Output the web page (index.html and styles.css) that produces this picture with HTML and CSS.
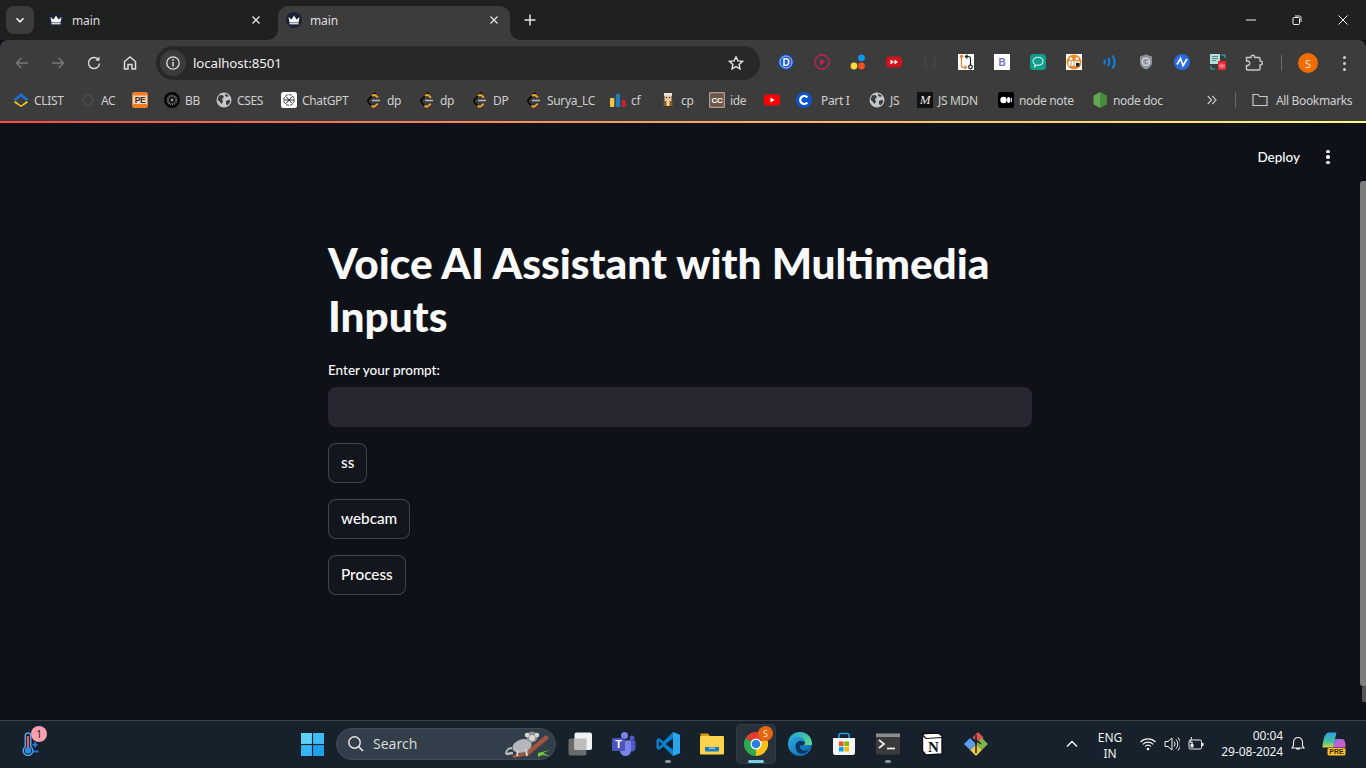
FILE: index.html
```html
<!DOCTYPE html>
<html lang="en">
<head>
<meta charset="utf-8">
<title>main</title>
<link rel="stylesheet" href="styles.css">
</head>
<body>
<svg class="defs" width="0" height="0" aria-hidden="true">
  <symbol id="crown" viewBox="0 0 16 16"><circle cx="8" cy="8" r="8" fill="#1c2233"/><path d="M2.500 5 5.500 7.500 8 3.500l2.500 4 3-2.500-1 5.500h-9z" fill="#f8f8f8"/><rect x="3.500" y="11" width="9" height="1.400" fill="#d8d8d8"/></symbol>
  <symbol id="globe" viewBox="0 0 16 16"><circle cx="8" cy="8" r="7.500" fill="#c4c7c9"/><path d="M3 3.500 6.500 3 8 5 6 7 7 9.500 5.500 12 3.500 9.500 1.500 7.500zM10 9l3.500-1.500.7 2.500-2.700 3.500-1.500-1.500zM9.500 1.500 13 4l-2 1-2-1.500z" fill="#3c3c3c"/></symbol>
  <symbol id="leet" viewBox="0 0 16 16"><path d="M9.500 .5 3 7a3 3 0 0 0 0 4.200L5.500 13.700" fill="none" stroke="#0c0c0c" stroke-width="1.800"/><path d="M5.500 13.700a3 3 0 0 0 4.200 0l2-2M6 4.200a3 3 0 0 1 4.200-.2l1.800 1.700" fill="none" stroke="#f5a524" stroke-width="1.800"/><path d="M6 8.500h8" stroke="#b8b8b8" stroke-width="1.500"/></symbol>
</svg>

<div class="screen">
  <header class="tabstrip">
    <div class="tabsearch"><svg class="ic10" viewBox="0 0 10 10"><path d="M1.500 3.300 5 6.800l3.500-3.500" fill="none" stroke="#f1f1f1" stroke-width="1.600"/></svg></div>
    <div class="tab">
      <svg class="ic"><use href="#crown"/></svg><span class="tab-title">main</span>
      <svg class="ic10" viewBox="0 0 10 10"><path d="M1.500 1.500l7 7m0-7-7 7" stroke="#e3e3e3" stroke-width="1.300"/></svg>
    </div>
    <div class="tab tab-active">
      <svg class="ic"><use href="#crown"/></svg><span class="tab-title">main</span>
      <svg class="ic10" viewBox="0 0 10 10"><path d="M1.500 1.500l7 7m0-7-7 7" stroke="#e3e3e3" stroke-width="1.300"/></svg>
    </div>
    <div class="newtab"><svg class="ic12" viewBox="0 0 12 12"><path d="M6 .5v11M.5 6h11" stroke="#e3e3e3" stroke-width="1.500"/></svg></div>
    <div class="winctl">
      <span class="winbtn"><svg class="ic10" viewBox="0 0 10 10"><path d="M0 5h10" stroke="#f0f0f0"/></svg></span>
      <span class="winbtn"><svg class="ic10" viewBox="0 0 10 10"><rect x="1" y="2.500" width="6.500" height="7" rx="1" fill="none" stroke="#f0f0f0"/><path d="M3 1h4.500a1.500 1.500 0 0 1 1.500 1.500V7" fill="none" stroke="#f0f0f0"/></svg></span>
      <span class="winbtn"><svg class="ic10" viewBox="0 0 10 10"><path d="M.5.500l9 9m0-9-9 9" stroke="#f0f0f0"/></svg></span>
    </div>
  </header>

  <div class="toolbar">
    <span class="navbtn"><svg class="ic" viewBox="0 0 16 16"><path d="M14 8H2.500M7.500 3l-5 5 5 5" fill="none" stroke="#777" stroke-width="1.500"/></svg></span>
    <span class="navbtn"><svg class="ic" viewBox="0 0 16 16"><path d="M2 8h11.500M8.500 3l5 5-5 5" fill="none" stroke="#777" stroke-width="1.500"/></svg></span>
    <span class="navbtn"><svg class="ic" viewBox="0 0 16 16"><path d="M13.500 8.500A5.500 5.500 0 1 1 12 4.300" fill="none" stroke="#dcdcdc" stroke-width="1.500"/><path d="M13.500 1.500v4.200H9.300z" fill="#dcdcdc"/></svg></span>
    <span class="navbtn"><svg class="ic" viewBox="0 0 16 16"><path d="M2.500 14V6.500L8 2l5.500 4.500V14H10V9.500H6V14z" fill="none" stroke="#dcdcdc" stroke-width="1.500"/></svg></span>
    <div class="omnibox">
      <span class="siteinfo"><svg class="ic" viewBox="0 0 16 16"><circle cx="8" cy="8" r="6.200" fill="none" stroke="#e3e3e3" stroke-width="1.300"/><path d="M8 7v4.500" stroke="#e3e3e3" stroke-width="1.400"/><circle cx="8" cy="5" r=".9" fill="#e3e3e3"/></svg></span>
      <span class="url">localhost:8501</span>
      <svg class="ic star" viewBox="0 0 16 16"><path d="M8 1.800l1.900 4.100 4.500.5-3.300 3 .9 4.400L8 11.600l-4 2.200.9-4.400-3.300-3 4.500-.5z" fill="none" stroke="#e3e3e3" stroke-width="1.400"/></svg>
    </div>
    <div class="exts">
      <span class="ext"><svg class="ic" viewBox="0 0 16 16"><circle cx="8" cy="8" r="7.500" fill="#1a56d6"/><circle cx="8" cy="8" r="6" fill="none" stroke="#bcd0f7" stroke-width=".9"/><text x="8" y="11.500" class="t-d">D</text></svg></span>
      <span class="ext"><svg class="ic" viewBox="0 0 16 16"><circle cx="8" cy="8" r="7" fill="none" stroke="#c2224f" stroke-width="1.400"/><path d="M6 4.500 11 8l-5 3.500z" fill="#c2224f"/></svg></span>
      <span class="ext"><svg class="ic" viewBox="0 0 16 16"><circle cx="11.500" cy="3.800" r="3.400" fill="#0a97f5"/><circle cx="4" cy="12" r="3.400" fill="#fdd835"/><circle cx="11.500" cy="12" r="3.400" fill="#f4511e"/></svg></span>
      <span class="ext"><svg class="ic" viewBox="0 0 16 16"><rect y="2.500" width="16" height="11" rx="3.500" fill="#d0121b"/><path d="M4.500 5.500 8 8l-3.500 2.500zM8.500 5.500 12 8l-3.500 2.500z" fill="#fff"/></svg></span>
      <span class="ext"><svg class="ic" viewBox="0 0 16 16"><path d="M3 2.500h3M3 2.500v11M3 13.500h3M13 2.500h-3M13 2.500v11M13 13.500h-3" fill="none" stroke="#4a4a4a" stroke-width="1.200"/></svg></span>
      <span class="ext"><svg class="ic" viewBox="0 0 16 16"><rect width="16" height="16" fill="#fff"/><circle cx="3.500" cy="2.500" r="1.800" fill="#ef7d2a"/><path d="M3.500 4v7.500a2 2 0 0 0 2 2H8M6.500 11.500 8.500 13.500 6.500 15" fill="none" stroke="#ef7d2a" stroke-width="1.200"/><circle cx="12.500" cy="13" r="1.800" fill="none" stroke="#222" stroke-width="1.200"/><path d="M12.500 11V4.500a2 2 0 0 0-2-2H8M9.500 .8 7.500 2.500 9.500 4.500" fill="none" stroke="#222" stroke-width="1.200"/></svg></span>
      <span class="ext"><svg class="ic" viewBox="0 0 16 16"><rect width="16" height="16" fill="#fff"/><text x="8" y="11.800" class="t-b">B</text></svg></span>
      <span class="ext"><svg class="ic" viewBox="0 0 16 16"><rect width="16" height="16" rx="3.500" fill="#109c8b"/><path d="M8 3.300c3 0 5 1.600 5 3.900s-2 3.900-5 3.900l-1 0-2.500 1.600.6-2.300C3.700 9.700 3 8.600 3 7.200 3 4.900 5 3.300 8 3.300z" fill="none" stroke="#d8f3ee" stroke-width="1.100"/></svg></span>
      <span class="ext"><svg class="ic" viewBox="0 0 16 16"><rect width="16" height="16" fill="#fff"/><circle cx="8" cy="8" r="7.500" fill="#f08a24"/><rect x="2.500" y="7" width="11" height="5" rx="1" fill="#fff"/><path d="M5 7v5M8 7v5M11 7v5" stroke="#555" stroke-width=".6"/><circle cx="5" cy="4.800" r="1.500" fill="#fff"/><circle cx="11" cy="4.800" r="1.500" fill="#fff"/><rect x="10" y="9" width="3.500" height="3.500" fill="#222"/></svg></span>
      <span class="ext"><svg class="ic" viewBox="0 0 16 16"><g fill="none" stroke="#0a84e8" stroke-width="2"><path d="M2 6a3 3 0 0 1 0 4"/><path d="M6 4a7 7 0 0 1 0 8"/><path d="M10.500 1.500a12 12 0 0 1 0 13"/></g></svg></span>
      <span class="ext"><svg class="ic" viewBox="0 0 16 16"><path d="M8 .5l6 2v6c0 3.500-3 6-6 7-3-1-6-3.500-6-7v-6z" fill="#8d949b"/><circle cx="8" cy="7.800" r="3.600" fill="none" stroke="#d7dadd" stroke-width="1.300"/><path d="M8 7.800h3.400" stroke="#d7dadd" stroke-width="1.300"/></svg></span>
      <span class="ext"><svg class="ic" viewBox="0 0 16 16"><circle cx="8" cy="8" r="8" fill="#2a6be0"/><path d="M3 10.500 6.500 4.500l2.500 7L13 5" fill="none" stroke="#fff" stroke-width="1.700"/></svg></span>
      <span class="ext"><svg class="ic" viewBox="0 0 16 16"><rect x="0" y="0" width="10" height="10" fill="#b4dcd8"/><path d="M2 2.500h6M2 4.500h6M2 6.500h4" stroke="#56807c" stroke-width=".9"/><rect x="8" y="7" width="8" height="9" fill="#e4292f"/><path d="M10 10.500v3M12 9.500v5M14 10.500v3" stroke="#ffd1d1" stroke-width=".9"/><path d="M11 1h4v3M1 12v3h4" fill="none" stroke="#25b7d3" stroke-width="1"/></svg></span>
      <span class="ext"><svg class="ic-18" viewBox="0 0 18 18"><path d="M1.500 3.500h4.500V3a1.800 1.800 0 0 1 3.600 0v.5H14a1 1 0 0 1 1 1V7h.3a2 2 0 0 1 0 4H15v4a1 1 0 0 1-1 1H2.500a1 1 0 0 1-1-1v-3.500H3a2.300 2.300 0 0 0 0-4.500H1.500z" fill="none" stroke="#c8c8c8" stroke-width="1.400"/></svg></span>
    </div>
    <span class="tool-sep"></span>
    <span class="avatar">S</span>
    <span class="kebab"><i></i><i></i><i></i></span>
  </div>

  <nav class="bookmarks">
    <div class="bm-grid">
      <a class="bm"><svg class="ic" viewBox="0 0 16 16"><path d="M.500 7.500 8 1l7.500 6.500-2 1.800L8 4.500 2.500 9.300z" fill="#1d6fd8"/><path d="M2.500 10 8 14.500 13.500 10l1.500 1.500L8 16 1 11.500z" fill="#fbc911" transform="translate(0 -1)"/></svg>CLIST</a>
      <a class="bm"><svg class="ic" viewBox="0 0 16 16"><circle cx="8" cy="8" r="5" fill="none" stroke="#4c4c4c" stroke-width="2.500" stroke-dasharray="2 1.200"/></svg>AC</a>
      <a class="bm"><svg class="ic" viewBox="0 0 16 16"><rect width="16" height="16" rx="2.500" fill="#ef7c26"/><rect x="1" y="3.500" width="14" height="8.500" fill="#e9d6c4"/><text x="8" y="11" class="t-pe">PE</text></svg></a>
      <a class="bm"><svg class="ic" viewBox="0 0 16 16"><circle cx="8" cy="8" r="8" fill="#060606"/><circle cx="8" cy="8" r="4.200" fill="none" stroke="#8a8a8a" stroke-width="2.400" stroke-dasharray=".9 .9"/><circle cx="8" cy="8" r="1.500" fill="#999"/></svg>BB</a>
      <a class="bm"><svg class="ic"><use href="#globe"/></svg>CSES</a>
      <a class="bm"><svg class="ic" viewBox="0 0 16 16"><rect width="16" height="16" rx="2.500" fill="#fff"/><g fill="none" stroke="#333" stroke-width="1"><circle cx="8" cy="8" r="5.300" stroke-dasharray="3 1"/><path d="M5 4.500 11 11.500M11 4.500 5 11.500M3 8h10"/></g></svg>ChatGPT</a>
      <a class="bm"><svg class="ic"><use href="#leet"/></svg>dp</a>
      <a class="bm"><svg class="ic"><use href="#leet"/></svg>dp</a>
      <a class="bm"><svg class="ic"><use href="#leet"/></svg>DP</a>
      <a class="bm"><svg class="ic"><use href="#leet"/></svg>Surya_LC</a>
      <a class="bm"><svg class="ic" viewBox="0 0 16 16"><rect y="6" width="4.300" height="9" rx=".7" fill="#f6c443"/><rect x="5.800" y="2" width="4.300" height="13" rx=".7" fill="#1a7fc1"/><rect x="11.600" y="8" width="4.300" height="7" rx=".7" fill="#c0242c"/></svg>cf</a>
      <a class="bm"><svg class="ic" viewBox="0 0 16 16"><rect x="4" y="1" width="8" height="3" fill="#e6e6e6"/><rect x="4.500" y="3.500" width="7" height="5.500" fill="#f0c8a0"/><rect x="6" y="5" width="1.200" height="1.200" fill="#222"/><rect x="9" y="5" width="1.200" height="1.200" fill="#222"/><rect x="3.500" y="9" width="9" height="5" fill="#8a5a26"/><rect x="6.500" y="9" width="3" height="5" fill="#e8d8a8"/><rect x="4.500" y="14" width="7" height="1.500" fill="#4a3413"/></svg>cp</a>
      <a class="bm"><svg class="ic" viewBox="0 0 16 16"><rect width="16" height="16" fill="#6b5443" rx="1"/><rect x=".8" y=".8" width="14.400" height="14.400" fill="none" stroke="#ddd5cc" stroke-width=".7"/><text x="8" y="11.300" class="t-cc">CC</text></svg>ide</a>
      <a class="bm"><svg class="ic" viewBox="0 0 16 16"><rect y="2.500" width="16" height="11" rx="3" fill="#f00"/><path d="M6.500 5.500 10.500 8l-4 2.500z" fill="#fff"/></svg></a>
      <a class="bm bm-wide"><svg class="ic" viewBox="0 0 16 16"><circle cx="8" cy="8" r="8" fill="#0b54d0"/><path d="M11.300 5.500A4 4 0 1 0 11.300 10.500" fill="none" stroke="#fff" stroke-width="2.200"/></svg>Part I</a>
      <a class="bm"><svg class="ic"><use href="#globe"/></svg>JS</a>
      <a class="bm"><svg class="ic" viewBox="0 0 16 16"><rect width="16" height="16" fill="#101010"/><text x="8" y="12.300" class="t-m">M</text></svg>JS MDN</a>
      <a class="bm"><svg class="ic" viewBox="0 0 16 16"><rect width="16" height="16" rx="2" fill="#000"/><ellipse cx="5.500" cy="8" rx="3.200" ry="3.300" fill="#fff"/><ellipse cx="10.600" cy="8" rx="1.600" ry="3" fill="#fff"/><ellipse cx="13.300" cy="8" rx=".6" ry="2.600" fill="#fff"/></svg>node note</a>
      <a class="bm"><svg class="ic" viewBox="0 0 16 16"><path d="M8 0l6.500 3.800v8.400L8 16l-6.500-3.800V3.800z" fill="#62a84f"/><path d="M8 0l6.500 3.800v8.400L8 16z" fill="#4b8a3d"/></svg>node doc</a>
    </div>
    <span class="bm-more"><svg class="ic10" viewBox="0 0 10 10"><path d="M.8 1 4.500 5 .8 9M5.300 1 9 5 5.300 9" fill="none" stroke="#c4c4c4" stroke-width="1.200"/></svg></span>
    <span class="bm-sep"></span>
    <a class="bm bm-all"><svg class="ic" viewBox="0 0 16 16"><path d="M1 13.500v-11h5l1.500 2h7.500v9z" fill="none" stroke="#c8c8c8" stroke-width="1.200"/></svg>All Bookmarks</a>
  </nav>

  <main class="app">
    <div class="decoration"></div>
    <div class="app-head">
      <span class="deploy">Deploy</span>
      <span class="st-menu"><i></i><i></i><i></i></span>
    </div>
    <section class="block">
      <h1 class="title">Voice AI Assistant with Multimedia Inputs</h1>
      <label class="field-label" for="prompt">Enter your prompt:</label>
      <input class="field" id="prompt" type="text">
      <button class="btn" type="button">ss</button>
      <button class="btn" type="button">webcam</button>
      <button class="btn" type="button">Process</button>
    </section>
    <div class="scroll-track"></div>
    <div class="scroll-thumb"></div>
  </main>

  <footer class="taskbar">
    <div class="tb-left">
      <span class="temp">
        <svg class="ic24" viewBox="0 0 24 24"><path d="M8 1a2.800 2.800 0 0 1 2.800 2.800v11a4.800 4.800 0 1 1-5.600 0v-11A2.800 2.800 0 0 1 8 1z" fill="#16202a" stroke="#5aa8ee" stroke-width="1.400"/><rect x="6.800" y="4" width="2.400" height="12" fill="#d65a7a"/><circle cx="8" cy="18.500" r="3.200" fill="#2f8ae6"/><path d="M15 10v4M12.800 12 15 14.500 17.200 12M12.500 19.500h6" stroke="#1c78e0" stroke-width="1.800" fill="none"/></svg>
        <span class="temp-badge">1</span>
      </span>
    </div>
    <span class="tb-start"><svg class="ic-win" viewBox="0 0 24 24"><rect width="11.400" height="11.400" fill="#5fd0f8"/><rect x="12.600" width="11.400" height="11.400" fill="#3dbcf6"/><rect y="12.600" width="11.400" height="11.400" fill="#36b4f5"/><rect x="12.600" y="12.600" width="11.400" height="11.400" fill="#1ea2f0"/></svg></span>
    <div class="tb-search">
      <svg class="ic18" viewBox="0 0 18 18"><circle cx="7.500" cy="7.500" r="5.700" fill="none" stroke="#e6e6e6" stroke-width="1.500"/><path d="M11.700 11.700 16 16" stroke="#e6e6e6" stroke-width="1.700"/></svg>
      <span class="tb-search-text">Search</span>
      <svg class="monkey" viewBox="0 0 46 30"><path d="M1 25 L8 24" stroke="#b9bdbf" stroke-width="2.500" fill="none"/><path d="M1 25c0-4 3-6 6-6" stroke="#b9bdbf" stroke-width="2" fill="none"/><path d="M7 27 20 23 41 6l3 3-20 17-15 3z" fill="#a0563f"/><ellipse cx="17" cy="17" rx="10" ry="6.500" fill="#b5b8ba" transform="rotate(-18 17 17)"/><circle cx="27" cy="8" r="5.600" fill="#8d9194"/><circle cx="27" cy="9" r="3" fill="#e0d9d3"/><circle cx="22" cy="6" r="2.300" fill="#d6d6d6"/><circle cx="32" cy="6" r="2.300" fill="#d6d6d6"/><path d="M21 20l1 7M13 21l-1 6" stroke="#d0d0d0" stroke-width="2"/><path d="M33 24l12-3-7 3 7 3-8-1-4 2z" fill="#74c83a"/></svg>
    </div>
    <span class="tb-app"><svg class="ic24" viewBox="0 0 24 24"><rect x=".5" y="6.500" width="18" height="17" rx="2" fill="#6b6b6b"/><rect x="6.500" y=".5" width="17.500" height="17.500" rx="2" fill="#f2f2f2"/><rect x="6.500" y="6.500" width="12" height="11.500" fill="#bdbdbd"/></svg></span>
    <span class="tb-app"><svg class="ic24" viewBox="0 0 24 24"><circle cx="12.500" cy="3.500" r="3.500" fill="#7b83eb"/><circle cx="20" cy="6" r="2.500" fill="#5059c9"/><path d="M15 8.500h8.500v7a4 4 0 0 1-4 4H17z" fill="#5059c9"/><path d="M6 8.500h13v10a5.500 5.500 0 0 1-11 0z" fill="#7b83eb"/><rect x="0" y="6" width="13" height="13" rx="1.300" fill="#4b53bc"/><text x="6.500" y="16.300" class="t-t">T</text></svg></span>
    <span class="tb-app tb-run"><svg class="ic24" viewBox="0 0 24 24"><path d="M17 0 7.500 9.500 3 6 .5 7.500v9L3 18l4.500-3.500L17 24l7-3V3z" fill="#0a7fd0"/><path d="M17 0 24 3v18l-7 3z" fill="#2aa5ee"/><path d="M17 6.500v11L9.500 12zM3 8.800 6 12 3 15.200z" fill="#16202a"/></svg></span>
    <span class="tb-app"><svg class="ic24" viewBox="0 0 24 24"><path d="M0 2.500a1 1 0 0 1 1-1h7l2 2.500H1z" fill="#d49a14"/><rect y="4" width="24" height="18.500" rx="1" fill="#fcd34a"/><path d="M5 15h14v3.500a1 1 0 0 1-1 1H6a1 1 0 0 1-1-1z" fill="#1f7cc2"/><rect x="9" y="15.500" width="6" height="1.300" fill="#8fd0f2"/></svg></span>
    <span class="tb-app tb-chrome">
      <svg class="ic24" viewBox="0 0 24 24"><path d="M12 12 1.600 6A12 12 0 0 1 22.400 6z" fill="#e33b2e"/><path d="M12 12 22.400 6A12 12 0 0 1 12 24z" fill="#fbc116"/><path d="M12 12 12 24A12 12 0 0 1 1.600 6z" fill="#2da94f"/><circle cx="12" cy="12" r="5.500" fill="#fff"/><circle cx="12" cy="12" r="4.300" fill="#2a7de1"/></svg>
      <span class="chrome-badge">S</span>
    </span>
    <span class="tb-app"><svg class="ic24" viewBox="0 0 24 24"><defs><linearGradient id="edg" x1="0" y1="0" x2="1" y2="1"><stop offset="0" stop-color="#2fb5e8"/><stop offset="1" stop-color="#0a5aa8"/></linearGradient><linearGradient id="edg2" x1="0" y1="0" x2="1" y2="1"><stop offset="0" stop-color="#1ea2d8"/><stop offset="1" stop-color="#5fe07a"/></linearGradient></defs><circle cx="12" cy="12" r="12" fill="url(#edg)"/><path d="M24 12.500C24 5 18.500 0 12 0 6 0 1.500 4 .5 9c2-3.500 6-5 9.500-4.500 5 .8 7 3.500 7 6 0 1.500-1 2.500-3 2.500h9z" fill="url(#edg2)"/><path d="M7.500 14c0-3 2.500-5 5.500-5 1.500 0 3 .6 4 1.500 0 2-1.300 3-3.500 3-1 0-1.500.5-1.500 1.500 0 3 4 5 8.500 3C18.500 21 15 22 12.500 21.500 9.500 21 7.500 17.500 7.500 14z" fill="#08345e"/></svg></span>
    <span class="tb-app"><svg class="ic24" viewBox="0 0 24 24"><path d="M7 6V3.500A2 2 0 0 1 9 1.500h6a2 2 0 0 1 2 2V6" fill="none" stroke="#1aa3e8" stroke-width="1.600"/><path d="M1 6h22v14.500A2.500 2.500 0 0 1 20.500 23h-17A2.500 2.500 0 0 1 1 20.500z" fill="#f5f5f5"/><rect x="7" y="9.500" width="4.600" height="4.600" fill="#f25022"/><rect x="12.400" y="9.500" width="4.600" height="4.600" fill="#7fba00"/><rect x="7" y="14.900" width="4.600" height="4.600" fill="#00a4ef"/><rect x="12.400" y="14.900" width="4.600" height="4.600" fill="#ffb900"/></svg></span>
    <span class="tb-app tb-run"><svg class="ic24" viewBox="0 0 24 24"><rect y="1.500" width="24" height="21" rx="1.500" fill="#3b3b3b"/><rect y="1.500" width="24" height="3.500" fill="#8c8c8c"/><path d="M3 8l5 4-5 4" fill="none" stroke="#f2f2f2" stroke-width="1.700"/><path d="M11 16.500h8" stroke="#f2f2f2" stroke-width="1.700"/></svg></span>
    <span class="tb-app"><svg class="ic24" viewBox="0 0 24 24"><path d="M5 1.500 18.500 1 22 4v18l-16 1-3.500-4V3z" fill="#fff" stroke="#111" stroke-width="1.400"/><path d="M3 3.500 6 6.500l16-1" fill="none" stroke="#111" stroke-width="1.200"/><text x="13.500" y="19.500" class="t-n">N</text></svg></span>
    <span class="tb-app"><svg class="ic24" viewBox="0 0 24 24"><path d="M14 0l5.500 5.500-5.500 5.500-5.500-5.500z" fill="#d9534f"/><path d="M18 6l6 6-6 6-6-6z" fill="#7ab648"/><path d="M12 12l6 6-6 6-6-6z" fill="#ecc94b"/><path d="M6 6l6 6-6 6-6-6z" fill="#5b9bf3"/><path d="M12 3v18M12 8l5 4" stroke="#222" stroke-width="1.500" fill="none"/></svg></span>
    <div class="tray">
      <span class="tray-chev"><svg class="ic12" viewBox="0 0 12 12"><path d="M1 8.500 6 3.500l5 5" fill="none" stroke="#f0f0f0" stroke-width="1.500"/></svg></span>
      <span class="tray-lang"><span>ENG</span><span>IN</span></span>
      <span class="tray-ic"><svg class="ic16" viewBox="0 0 16 16"><g fill="none" stroke="#f0f0f0" stroke-width="1.100"><path d="M.5 6a10.500 10.500 0 0 1 15 0"/><path d="M2.800 8.300a7.200 7.200 0 0 1 10.400 0"/><path d="M5 10.500a4 4 0 0 1 6 0"/></g><circle cx="8" cy="13" r="1.300" fill="#f0f0f0"/></svg></span>
      <span class="tray-ic"><svg class="ic16" viewBox="0 0 16 16"><path d="M1 5.500h3L8 2v12L4 10.500H1z" fill="none" stroke="#f0f0f0" stroke-width="1"/><path d="M10 5.500a3.500 3.500 0 0 1 0 5M12 3.500a6.500 6.500 0 0 1 0 9M14 1.500a9.500 9.500 0 0 1 0 13" fill="none" stroke="#f0f0f0" stroke-width="1"/></svg></span>
      <span class="tray-ic"><svg class="ic16" viewBox="0 0 16 16"><rect x="1" y="4" width="12.500" height="9" rx="1.500" fill="none" stroke="#f0f0f0"/><rect x="14" y="7" width="1.500" height="3" fill="#f0f0f0"/><rect x="2.500" y="8" width="3" height="3.500" fill="#f0f0f0"/><path d="M3.500 1 2.500 6.500h2L3.500 9" fill="none" stroke="#f0f0f0"/></svg></span>
      <span class="clock"><span>00:04</span><span>29-08-2024</span></span>
      <span class="tray-bell"><svg class="ic16" viewBox="0 0 16 16"><path d="M8 1.500a4.500 4.500 0 0 1 4.500 4.500v3.500l1.500 2.500H2l1.500-2.500V6A4.500 4.500 0 0 1 8 1.500zM6.200 12a1.900 1.900 0 0 0 3.600 0" fill="none" stroke="#f0f0f0" stroke-width="1.100"/></svg></span>
      <span class="tray-copilot"><svg class="ic24" viewBox="0 0 24 24"><defs><linearGradient id="cop" x1="0" y1="0" x2="0" y2="1"><stop offset="0" stop-color="#2f9fe8"/><stop offset=".6" stop-color="#3fc39a"/><stop offset="1" stop-color="#d8cf3c"/></linearGradient><linearGradient id="cop2" x1="0" y1="0" x2="1" y2="1"><stop offset="0" stop-color="#8d6cf0"/><stop offset="1" stop-color="#e85ac0"/></linearGradient></defs><path d="M13 7h7c3 0 3.500 4 3.500 8.500H10z" fill="url(#cop2)"/><path d="M6.500 .5h8l-3.500 15H.5C.5 9 3 .5 6.500 .5z" fill="url(#cop)"/><rect x="5.500" y="16" width="18" height="7.500" rx="1.500" fill="#fbc02d"/><text x="14.500" y="22.200" class="t-pre">PRE</text></svg></span>
    </div>
  </footer>
</div>
</body>
</html>
```
FILE: styles.css
```css
* { box-sizing: border-box; }
html, body { margin: 0; height: 100%; overflow: hidden; background: #0e1117; }
svg { display: block; flex: none; }
.defs { position: absolute; }
.ic { width: 16px; height: 16px; }
.ic-18 { width: 18px; height: 18px; }
.ic10 { width: 10px; height: 10px; }
.ic12 { width: 12px; height: 12px; }
.ic16 { width: 16px; height: 16px; }
.ic18 { width: 18px; height: 18px; }
.ic24 { width: 24px; height: 24px; }
.ic-win { width: 23px; height: 23px; }

.screen {
  display: flex; flex-direction: column; height: 768px; width: 1366px;
  font-family: "Noto Sans", "Open Sans", sans-serif; color: #e3e3e3;
}

/* tab strip */
.tabstrip { display: flex; height: 40px; flex: none; background: #1f2121; padding-top: 6px; }
.tabsearch {
  width: 28px; height: 28px; margin-left: 6px; margin-right: 4px; border-radius: 8px;
  background: #3c3c3c; display: flex; align-items: center; justify-content: center;
}
.tab {
  width: 232px; height: 34px; padding: 0 9px 6px 10px;
  display: flex; align-items: center; font-size: 12px; letter-spacing: -.1px; color: #dedede;
}
.tab-active {
  background: #3c3c3c; border-radius: 10px 10px 0 0; position: relative;
  margin-left: 8px; padding: 0 11px 6px 8px;
}
.tab-active::before, .tab-active::after {
  content: ""; position: absolute; bottom: 0; width: 10px; height: 10px;
}
.tab-active::before { left: -10px; background: radial-gradient(circle at 0 0, transparent 9.500px, #3c3c3c 10px); }
.tab-active::after { right: -10px; background: radial-gradient(circle at 100% 0, transparent 9.500px, #3c3c3c 10px); }
.tab-title { margin-left: 8px; flex: 1; }
.newtab { width: 40px; display: flex; align-items: center; justify-content: center; height: 28px; }
.winctl { margin-left: auto; display: flex; height: 28px; align-items: center; }
.winbtn { width: 46px; display: flex; justify-content: center; }

/* toolbar */
.toolbar {
  height: 45px; flex: none; display: flex; align-items: center; padding: 1px 0 0 4px;
  background: #3c3c3c; border-radius: 8px 8px 0 0;
}
.navbtn { width: 36px; display: flex; justify-content: center; }
.omnibox {
  width: 604px; height: 34px; margin-left: 8px; border-radius: 17px; background: #282828;
  display: flex; align-items: center; padding-left: 4px;
}
.siteinfo {
  width: 26px; height: 26px; border-radius: 50%; background: #3c3c3c;
  display: flex; align-items: center; justify-content: center;
}
.url { margin-left: 7px; font-size: 13.300px; color: #f0f0f0; letter-spacing: -.1px; flex: 1; }
.star { margin-right: 16px; }
.exts { display: flex; margin-left: 8px; }
.ext { width: 36px; display: flex; justify-content: center; }
.tool-sep { width: 18px; display: flex; justify-content: center; }
.tool-sep::before { content: ""; width: 1px; height: 16px; background: #6a6a6a; }
.avatar {
  width: 20px; height: 20px; margin: 0 8px; border-radius: 50%; background: #ef6c00; color: #f8e6d8;
  font-size: 11px; display: flex; align-items: center; justify-content: center;
}
.kebab { width: 36px; display: flex; flex-direction: column; align-items: center; gap: 3px; }
.kebab i { width: 3px; height: 3px; border-radius: 50%; background: #d0d0d0; }

/* bookmarks */
.bookmarks {
  height: 36px; flex: none; display: flex; align-items: center; padding: 0 0 6px 13px;
  background: #3c3c3c; font-size: 12px; color: #cfcfcf;
}
.bm-grid {
  display: grid; align-items: center;
  grid-template-columns: 67px 52px 32px 52px 65px 85px 53px 53px 54px 84px 50px 49px 55px 32px 73px 48px 81px 94px 108px;
}
.bm { display: flex; align-items: center; gap: 5px; letter-spacing: -.35px; white-space: nowrap; }
.bm-wide { gap: 9px; }
.bm-more { margin-left: 7px; width: 28px; }
.bm-sep { width: 1px; height: 16px; background: #666; }
.bm-all { margin-left: 16px; gap: 8px; }

/* app */
.app { position: relative; flex: 1; background: #0e1117; min-height: 0; padding-right: 6px; }
.decoration { height: 2px; margin-right: -6px; background: linear-gradient(90deg, #ff4b4b, #fffd80); }
.app-head { height: 68px; display: flex; align-items: center; justify-content: flex-end; padding-right: 24px; }
.deploy { font-family: Lato, "Noto Sans", sans-serif; font-size: 13.500px; font-weight: 500; color: #fafafa; margin-right: 20px; }
.st-menu { display: flex; flex-direction: column; gap: 2px; width: 16px; align-items: center; }
.st-menu i { width: 3.500px; height: 3.500px; border-radius: 50%; background: #fafafa; }
.block {
  width: 704px; margin: 0 auto; padding-top: 45px; display: flex; flex-direction: column; align-items: flex-start;
  font-family: Lato, "Noto Sans", sans-serif; color: #fafafa;
}
.title { margin: 0 0 19px; font-size: 42.400px; line-height: 53px; font-weight: 900; }
.field-label { font-size: 13.500px; font-weight: 500; line-height: 18px; height: 18px; margin-bottom: 8px; }
.field { width: 704px; height: 40px; border: 0; border-radius: 8px; background: #262730; margin-bottom: 16px; display: block; outline: 0; }
.btn {
  height: 40px; padding: 0 12px 2px; margin-bottom: 16px; border: 1px solid rgba(250, 250, 250, .2); border-radius: 8px;
  background: #13161d; color: #fafafa; font: 500 15.300px Lato, "Noto Sans", sans-serif;
}
.scroll-thumb { position: absolute; right: 0; top: 60px; width: 6px; height: 505px; background: #7d7d7d; border-radius: 3px 0 0 3px; }
.scroll-track { position: absolute; right: 0; top: 565px; width: 4px; height: 16px; background: #555; border-radius: 2px 0 0 2px; }

/* taskbar */
.taskbar {
  height: 48px; flex: none; display: flex; align-items: center; padding-bottom: 1px;
  background: #17212b; border-top: 1px solid #3a4046; font-size: 12px; color: #f0f0f0;
}
.tb-left { width: 290px; padding-left: 20px; }
.temp { position: relative; display: block; width: 24px; height: 24px; }
.temp-badge {
  position: absolute; left: 11px; top: -6px; width: 16px; height: 16px; border-radius: 50%;
  background: #fb9fae; color: #222; font-size: 10px; line-height: 16px; text-align: center;
}
.tb-start { width: 44px; display: flex; justify-content: center; }
.tb-search {
  width: 220px; height: 32px; margin: 0 2px; border-radius: 16px; background: #323e49; border: 1px solid #414c56;
  display: flex; align-items: center; padding-left: 10px; position: relative;
}
.tb-search-text { margin-left: 8px; padding-bottom: 2px; font-size: 14px; color: #d6d6d6; flex: 1; }
.monkey { width: 46px; height: 30px; margin-right: 4px; }
.tb-app { width: 44px; height: 40px; display: flex; align-items: center; justify-content: center; position: relative; }
.tb-run::after {
  content: ""; position: absolute; left: 19px; bottom: 1px; width: 6px; height: 3px; border-radius: 2px; background: #8d949b;
}
.tb-chrome { background: #28323c; border-radius: 5px; width: 40px; margin: 0 2px; box-shadow: inset 0 0 0 1px #2f3a44; }
.tb-chrome::after {
  content: ""; position: absolute; left: 12px; bottom: 1px; width: 16px; height: 3px; border-radius: 2px; background: #7ad0dc;
}
.chrome-badge {
  position: absolute; left: 22px; top: 2px; width: 15px; height: 15px; border-radius: 50%;
  background: #e8650f; color: #f8e6d8; font-size: 9px; line-height: 15px; text-align: center;
}
.tray { margin-left: 58px; display: flex; align-items: center; }
.tray-chev { width: 32px; display: flex; justify-content: center; }
.tray-lang { width: 44px; margin-right: 4px; padding-top: 3px; display: flex; flex-direction: column; align-items: center; line-height: 16px; }
.tray-ic { width: 24px; display: flex; justify-content: center; }
.clock { width: 75px; display: flex; flex-direction: column; align-items: flex-end; line-height: 16px; letter-spacing: -.1px; }
.tray-bell { width: 24px; margin-left: 3px; display: flex; justify-content: center; }
.tray-copilot { width: 48px; display: flex; justify-content: center; }

/* letters inside icons */
.t-d { font: 700 10px "Liberation Sans", sans-serif; fill: #fff; text-anchor: middle; }
.t-b { font: 700 10px "Liberation Sans", sans-serif; fill: #7b6fd0; text-anchor: middle; }
.t-pe { font: 700 8.500px "Liberation Sans", sans-serif; fill: #4a2a10; text-anchor: middle; }
.t-cc { font: 700 8px "Liberation Sans", sans-serif; fill: #fff; text-anchor: middle; }
.t-m { font: italic 400 13px "Liberation Serif", serif; fill: #e8e8e8; text-anchor: middle; }
.t-t { font: 700 11px "Liberation Sans", sans-serif; fill: #fff; text-anchor: middle; }
.t-n { font: 700 15px "Liberation Serif", serif; fill: #111; text-anchor: middle; }
.t-pre { font: 800 7px "Liberation Sans", sans-serif; fill: #3a2a00; text-anchor: middle; }
```
